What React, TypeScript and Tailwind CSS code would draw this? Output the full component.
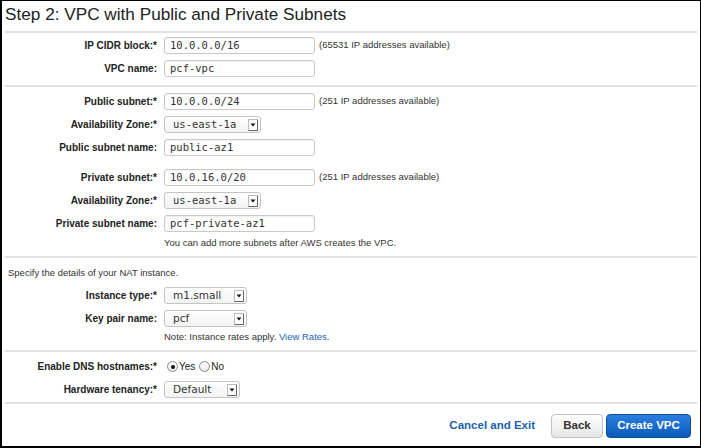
import type { ReactNode } from "react";

const sans = "font-['Liberation_Sans',Arial,sans-serif]";
const mono = "font-['DejaVu_Sans_Mono',monospace]";
const lucida = "font-['DejaVu_Sans',Verdana,sans-serif]";

function Row({ label, children }: { label: string; children: ReactNode }) {
  return (
    <div className="flex h-[23px] items-center">
      <div className="w-[156px] pr-[1px] text-right text-[10px] font-bold text-[#222]">
        {label}
      </div>
      <div className="ml-[6px] flex items-center">{children}</div>
    </div>
  );
}

function TextField({ value, note }: { value: string; note?: string }) {
  return (
    <>
      <div
        className={`flex h-[17px] w-[151px] items-center rounded-[3px] border border-[#c9c9c9] bg-white pl-[5px] text-[10.5px] text-[#333] shadow-[inset_0_1px_1px_rgba(0,0,0,0.06)] ${mono}`}
      >
        {value}
      </div>
      {note && <span className="ml-[4px] text-[9.5px] text-[#333]">{note}</span>}
    </>
  );
}

function Select({ value, width, isMono }: { value: string; width: string; isMono?: boolean }) {
  return (
    <div
      className={`flex h-[17px] items-center justify-between rounded-[3px] border border-[#c4c4c4] bg-gradient-to-b from-white to-[#f3f3f3] pl-[8px] pr-[2px] text-[10.5px] text-[#333] ${width} ${isMono ? mono : lucida}`}
    >
      <span>{value}</span>
      <span className="flex h-[12px] w-[10px] items-center justify-center rounded-[1px] border border-[#666] border-l-[#bbb] border-t-[#bbb] bg-white">
        <svg width="6" height="4" viewBox="0 0 6 4">
          <path d="M0.5 0.5h5L3 3.5z" fill="#111" />
        </svg>
      </span>
    </div>
  );
}

function Radio({ checked }: { checked?: boolean }) {
  return (
    <span className="flex h-[11px] w-[11px] items-center justify-center rounded-full border border-[#8a8a8a] bg-gradient-to-b from-white to-[#e9e9e9]">
      {checked && <span className="h-[4px] w-[4px] rounded-full bg-[#111]" />}
    </span>
  );
}

function Sep() {
  return <div className="mx-[3px] h-[2px] bg-[#e2e2e2]" />;
}

export default function App() {
  return (
    <div
      className={`flex h-[448px] w-[701px] flex-col border-y border-r border-black border-l-2 border-b-2 bg-white ${sans}`}
    >
      <h1 className="h-[30px] pl-[3px] pt-[3px] text-[17.2px] leading-[20px] text-[#222]">
        Step 2: VPC with Public and Private Subnets
      </h1>
      <Sep />
      <div className="pb-[5px] pt-[1px]">
        <Row label="IP CIDR block:*">
          <TextField value="10.0.0.0/16" note="(65531 IP addresses available)" />
        </Row>
        <Row label="VPC name:">
          <TextField value="pcf-vpc" />
        </Row>
      </div>
      <Sep />
      <div className="pb-[6px] pt-[3px]">
        <Row label="Public subnet:*">
          <TextField value="10.0.0.0/24" note="(251 IP addresses available)" />
        </Row>
        <Row label="Availability Zone:*">
          <Select value="us-east-1a" width="w-[97px]" isMono />
        </Row>
        <Row label="Public subnet name:">
          <TextField value="public-az1" />
        </Row>
        <div className="h-[7px]" />
        <Row label="Private subnet:*">
          <TextField value="10.0.16.0/20" note="(251 IP addresses available)" />
        </Row>
        <Row label="Availability Zone:*">
          <Select value="us-east-1a" width="w-[97px]" isMono />
        </Row>
        <Row label="Private subnet name:">
          <TextField value="pcf-private-az1" />
        </Row>
        <div className="ml-[162px] h-[15px] pt-[1px] text-[9.5px] leading-[14px] text-[#333]">
          You can add more subnets after AWS creates the VPC.
        </div>
      </div>
      <Sep />
      <div className="pb-[6px] pt-[8px]">
        <div className="h-[18px] pl-[6px] text-[9.5px] leading-[14px] text-[#333]">
          Specify the details of your NAT instance.
        </div>
        <Row label="Instance type:*">
          <Select value="m1.small" width="w-[83px]" />
        </Row>
        <Row label="Key pair name:">
          <Select value="pcf" width="w-[83px]" />
        </Row>
        <div className="ml-[162px] h-[14px] text-[9.5px] leading-[14px] text-[#333]">
          Note: Instance rates apply. <span className="text-[#1a64c0]">View Rates</span>.
        </div>
      </div>
      <Sep />
      <div className="pb-[1px] pt-[3px]">
        <Row label="Enable DNS hostnames:*">
          <div className="ml-[3px] flex items-center text-[10px] text-[#222]">
            <Radio checked />
            <span className="ml-[1px]">Yes</span>
            <span className="ml-[4px]">
              <Radio />
            </span>
            <span className="ml-[1px]">No</span>
          </div>
        </Row>
        <Row label="Hardware tenancy:*">
          <Select value="Default" width="w-[76px]" />
        </Row>
      </div>
      <Sep />
      <div className="flex items-center justify-end pr-[9px] pt-[10px]">
        <span className="mr-[16px] text-[11.5px] font-bold text-[#1b5fb0]">Cancel and Exit</span>
        <button className="h-[24px] w-[52px] rounded-[4px] border border-[#c2c2c2] bg-gradient-to-b from-white to-[#e6e6e6] text-[11.5px] font-bold text-[#333]">
          Back
        </button>
        <button className="ml-[3px] h-[24px] w-[85px] rounded-[4px] border border-[#0b4f9c] bg-gradient-to-b from-[#2a7de0] to-[#0a5cb8] text-[11.5px] font-bold text-white">
          Create VPC
        </button>
      </div>
    </div>
  );
}
